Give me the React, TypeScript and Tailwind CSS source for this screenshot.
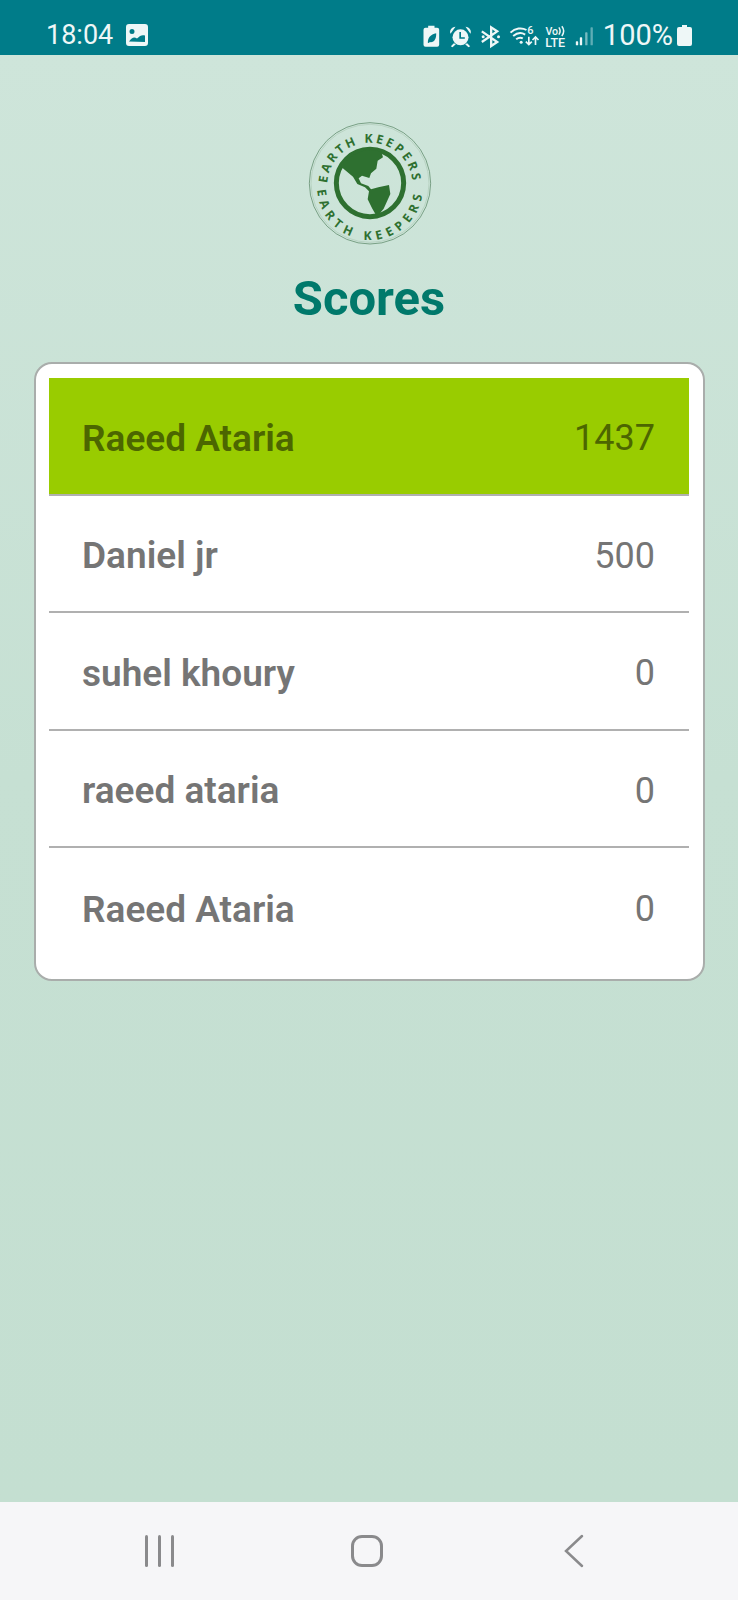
import React from 'react';

const SCORES = [
    { name: 'Raeed Ataria', score: 1437 },
    { name: 'Daniel jr', score: 500 },
    { name: 'suhel khoury', score: 0 },
    { name: 'raeed ataria', score: 0 },
    { name: 'Raeed Ataria', score: 0 },
];

const StatusIcons: React.FC = () => (
    <svg viewBox="150 60 530 90" className="w-[177px] h-[30px] shrink-0" fill="#eef7f7">
        {/* battery with leaf */}
        <path fillRule="evenodd" d="M177 77h19v6h8a6 6 0 0 1 6 6v45a6 6 0 0 1-6 6h-35a6 6 0 0 1-6-6V89a6 6 0 0 1 6-6h8zM176 128c0-14 8-25 25-28 1 14-5 27-16 27l-3-1-3 3z" />
        {/* alarm */}
        <circle cx="274" cy="112" r="24" />
        <path d="M244 101c-4-10 3-20 15-21zM304 101c4-10-3-20-15-21zM254 130l-9 9 5 3 10-9zM294 130l9 9-5 3-10-9z" />
        <path d="M273 96v18h14" fill="none" stroke="#007c89" strokeWidth="5" />
        {/* bluetooth */}
        <path d="M338 94l46 32-18 12V82l18 12-46 32" fill="none" stroke="#eef7f7" strokeWidth="7" />
        <circle cx="342" cy="110" r="4.500" />
        <circle cx="388" cy="110" r="4.500" />
        {/* wifi */}
        <path d="M424 98c14-14 34-16 48-8M432 108c11-9 25-11 36-4M441 118c6-5 14-6 20-3" fill="none" stroke="#eef7f7" strokeWidth="6" />
        <circle cx="456" cy="127" r="4.500" />
        <text x="474" y="103" fontSize="33" fontFamily="Roboto, sans-serif" fontWeight="500">6</text>
        <path d="M479 110v24M470 125l9 9 9-9M499 135v-24M490 120l9-9 9 9" fill="none" stroke="#eef7f7" strokeWidth="5" />
        {/* VoLTE */}
        <text x="529" y="105" fontSize="33" fontFamily="Roboto, sans-serif" fontWeight="500" textLength="38" lengthAdjust="spacingAndGlyphs">Vo</text>
        <path d="M569 82c5 7 5 15 0 22M578 79c7 9 7 20 0 29" fill="none" stroke="#eef7f7" strokeWidth="4.500" />
        <text x="528" y="140" fontSize="37" fontFamily="Roboto, sans-serif" fontWeight="500" textLength="60" lengthAdjust="spacingAndGlyphs">LTE</text>
        {/* signal */}
        <rect x="620" y="124" width="7" height="12" rx="2" />
        <rect x="632" y="112" width="7" height="24" rx="2" />
        <rect x="648" y="97" width="7" height="39" rx="2" opacity="0.5" />
        <rect x="664" y="82" width="7" height="54" rx="2" opacity="0.4" />
    </svg>
);

const Logo: React.FC = () => (
    <svg viewBox="0 0 480 450" className="w-[160px] h-[150px]">
        <defs>
            <path id="logoTop" d="M115 226A128 128 0 0 1 371 226" />
            <path id="logoBottom" d="M85 232A158 158 0 0 0 401 232" />
        </defs>
        <circle cx="243" cy="220" r="182" fill="none" stroke="#4f7d5a" strokeWidth="2" />
        <circle cx="243" cy="220" r="177" fill="none" stroke="#8fb096" strokeWidth="1" />
        <circle cx="243" cy="219" r="101" fill="none" stroke="#2e7030" strokeWidth="15" />
        <path
            fill="#2e7030"
            d="M158 172A101 101 0 0 1 277 125L282 142L266 152L262 176L246 190L241 204L219 197L209 205L216 220L238 228L246 238L268 232L300 225L304 252L284 296L264 320L250 296L236 268L240 244L228 232L205 222L192 200Z"
        />
        <g fill="#2e7030" fontFamily="'Open Sans', sans-serif" fontWeight="700" fontSize="37">
            <text letterSpacing="8">
                <textPath href="#logoTop" startOffset="50%" textAnchor="middle">EARTH KEEPERS</textPath>
            </text>
            <text letterSpacing="15">
                <textPath href="#logoBottom" startOffset="50%" textAnchor="middle">EARTH KEEPERS</textPath>
            </text>
        </g>
    </svg>
);

const App: React.FC = () => {
    return (
        <div className="h-[1600px] flex flex-col overflow-hidden font-['Roboto',sans-serif]">
            {/* Status bar */}
            <div className="h-[55px] shrink-0 bg-[#007c89] pt-[15px] pl-[46px] flex items-center text-[#eef7f7]">
                <span className="text-[27px] leading-none w-[80px]">18:04</span>
                <svg viewBox="0 0 22 22" className="w-[22px] h-[22px]">
                    <path fill="#eef7f7" fillRule="evenodd" d="M3 0h16a3 3 0 0 1 3 3v16a3 3 0 0 1-3 3H3a3 3 0 0 1-3-3V3a3 3 0 0 1 3-3zM6 5a2.500 2.500 0 1 0 0 5 2.500 2.500 0 0 0 0-5zM3 17.500c3-4 5-5 8-3 3-3 5-4 8-3v6.500z" />
                </svg>
                <div className="ml-auto flex items-center pr-[46px]">
                    <StatusIcons />
                    <span className="text-[29px] leading-none ml-[7px]">100%</span>
                    <svg viewBox="0 0 15 21" className="w-[15px] h-[21px] ml-[4px]">
                        <path fill="#eef7f7" d="M5 0h5v2h3a2 2 0 0 1 2 2v15a2 2 0 0 1-2 2H2a2 2 0 0 1-2-2V4a2 2 0 0 1 2-2h3z" />
                    </svg>
                </div>
            </div>

            {/* Main */}
            <main className="flex-1 bg-linear-to-b from-[#cee5da] via-[#c6e0d3] to-[#c4dfd1] flex flex-col items-center pt-[55px]">
                <Logo />
                <h1 className="mt-[9px] text-[49px] leading-[60px] font-bold text-[#00796b]">Scores</h1>
                <div className="mt-[33px] w-[671px] bg-white border-2 border-[#a9adab] rounded-[18px] px-[13.5px] pt-[14px] pb-[13px]">
                    {SCORES.map((row, i) => (
                        <div
                            key={i}
                            className={`h-[117.5px] flex items-center justify-between pt-[5px] pl-[33px] pr-[34px] ${i === 0 ? 'bg-[#99cc00] text-[#4c6600]' : 'text-[#757575]'} ${i < SCORES.length - 1 ? 'border-b-2 border-[#b0b0b0]' : ''}`}
                        >
                            <span className="text-[37px] font-semibold">{row.name}</span>
                            <span className="text-[36px]">{row.score}</span>
                        </div>
                    ))}
                </div>
            </main>

            {/* Nav bar */}
            <div className="h-[98px] shrink-0 bg-[#f6f6f8] flex items-center justify-start pl-[56px]">
                <div className="w-[207px] flex justify-center gap-[10px]">
                    <span className="w-[3px] h-[32px] rounded-full bg-[#8a8a8c]" />
                    <span className="w-[3px] h-[32px] rounded-full bg-[#8a8a8c]" />
                    <span className="w-[3px] h-[32px] rounded-full bg-[#8a8a8c]" />
                </div>
                <div className="w-[207px] flex justify-center">
                    <span className="w-[32px] h-[32px] rounded-[11px] border-[3px] border-[#8a8a8c]" />
                </div>
                <div className="w-[207px] flex justify-center">
                    <svg viewBox="0 0 20 34" className="w-[20px] h-[34px]" fill="none" stroke="#8a8a8c" strokeWidth="2.500" strokeLinecap="round">
                        <path d="M18 2L2 17l16 15" />
                    </svg>
                </div>
            </div>
        </div>
    );
};

export default App;
